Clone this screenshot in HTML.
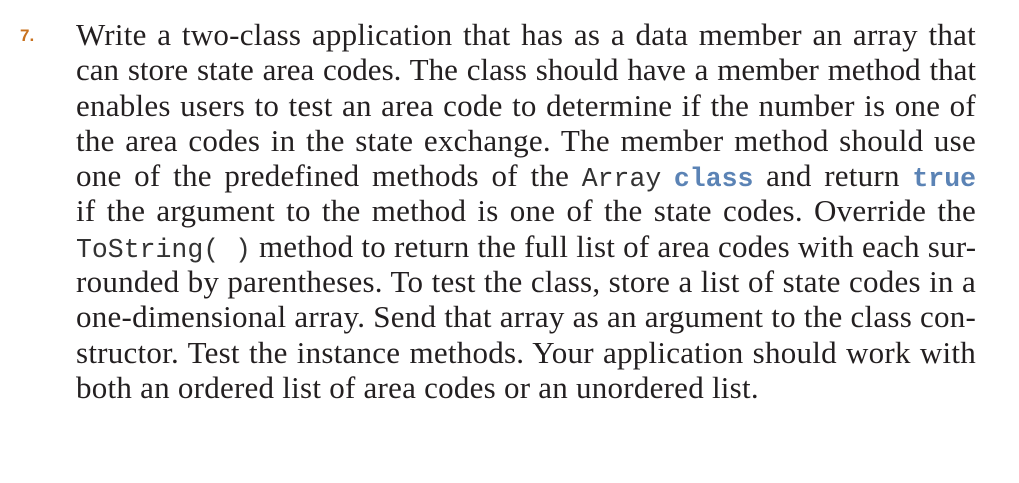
<!DOCTYPE html>
<html><head><meta charset="utf-8"><style>
html,body{margin:0;padding:0;background:#fff;width:1019px;height:483px;overflow:hidden}
.num{position:absolute;left:20px;top:26px;font:bold 17px "Liberation Sans",sans-serif;color:#c8711e}
.txt{position:absolute;left:76px;top:17px;width:900px;font-family:"Liberation Serif",serif;font-size:31px;letter-spacing:0.25px;color:#231f20}
.l{height:35.3px;line-height:35.3px;text-align:justify;text-align-last:justify;white-space:nowrap}
.l.last{text-align-last:left}
.l.t{letter-spacing:0}
.m{font-family:"Liberation Mono",monospace;font-size:26.5px;letter-spacing:0;color:#333}
.b{font-family:"Liberation Mono",monospace;font-size:26.5px;letter-spacing:0;font-weight:bold;color:#5b83b5}
</style></head><body>
<div class="num">7.</div>
<div class="txt">
<div class="l">Write a two-class application that has as a data member an array that</div>
<div class="l t">can store state area codes. The class should have a member method that</div>
<div class="l">enables users to test an area code to determine if the number is one of</div>
<div class="l">the area codes in the state exchange. The member method should use</div>
<div class="l">one of the predefined methods of the <span class="m">Array</span> <span class="b">class</span> and return <span class="b">true</span></div>
<div class="l">if the argument to the method is one of the state codes. Override the</div>
<div class="l"><span class="m">ToString( )</span> method to return the full list of area codes with each sur-</div>
<div class="l">rounded by parentheses. To test the class, store a list of state codes in a</div>
<div class="l">one-dimensional array. Send that array as an argument to the class con-</div>
<div class="l">structor. Test the instance methods. Your application should work with</div>
<div class="l last">both an ordered list of area codes or an unordered list.</div>
</div>
</body></html>
